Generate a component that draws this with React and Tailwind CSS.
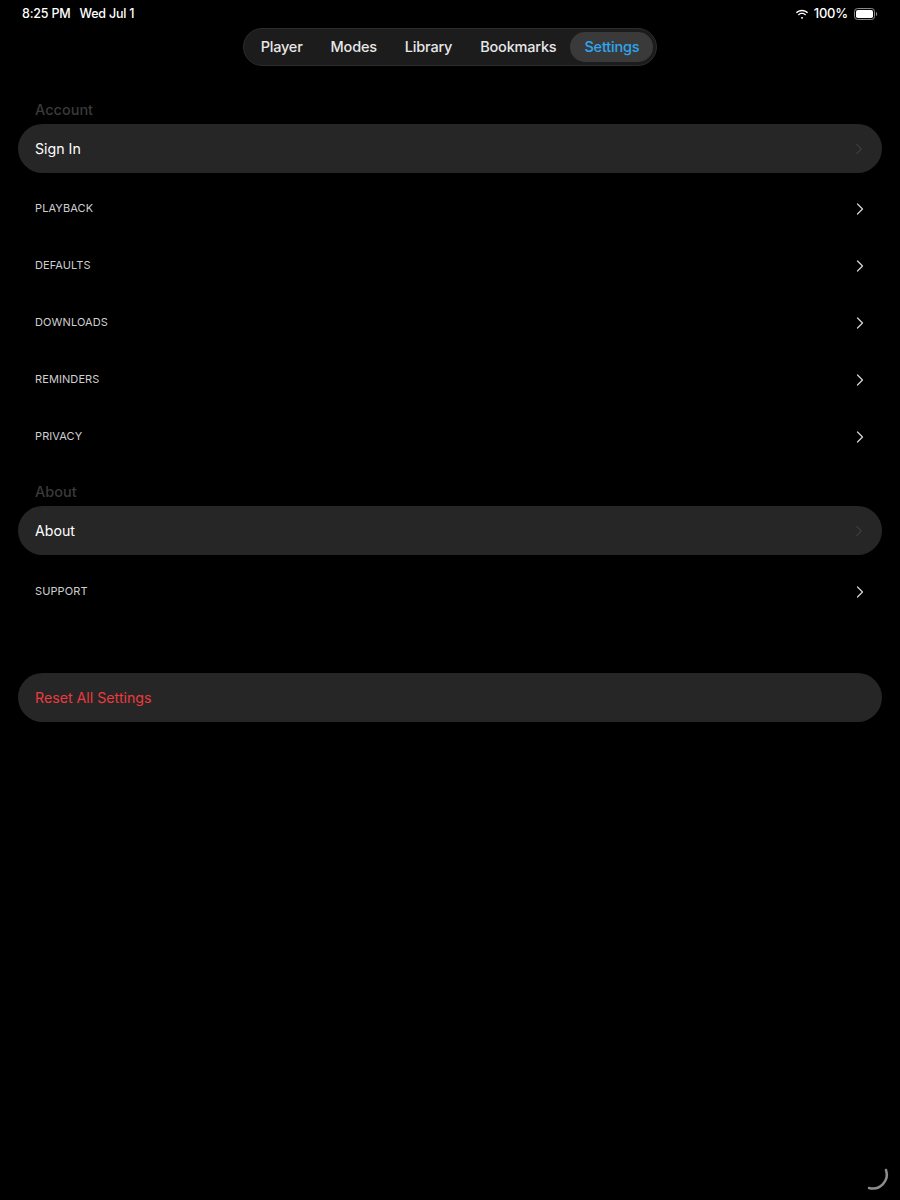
import { ChevronRight } from "lucide-react"

const tabs = ["Player", "Modes", "Library", "Bookmarks", "Settings"]
const mainItems = ["PLAYBACK", "DEFAULTS", "DOWNLOADS", "REMINDERS", "PRIVACY"]

function StatusBar() {
    return (
        <div className="h-[28px] flex items-center justify-between pl-[22px] pr-[22px] text-white text-[12.5px] font-medium tracking-[-0.2px]">
            <div className="flex items-center gap-[9px]">
                <span>8:25 PM</span>
                <span>Wed Jul 1</span>
            </div>
            <div className="flex items-center gap-[5px]">
                {/* wifi */}
                <svg width="14" height="11" viewBox="0 0 14 11" fill="white">
                    <path d="M7 2.2c2 0 3.8.8 5.1 2.1l1-1C11.5 1.7 9.4.8 7 .8S2.5 1.7.9 3.3l1 1C3.2 3 5 2.2 7 2.2z" />
                    <path d="M7 5.1c1.2 0 2.3.5 3.1 1.3l1-1C10 4.3 8.6 3.7 7 3.7S4 4.3 2.9 5.4l1 1C4.7 5.6 5.8 5.1 7 5.1z" />
                    <path d="M7 8c.5 0 .9.2 1.2.5L7 10.2 5.8 8.5C6.1 8.2 6.5 8 7 8z" />
                </svg>
                <span className="text-[13px]">100%</span>
                <svg width="24" height="12" viewBox="0 0 24 12" className="ml-[1px]">
                    <rect x="0.5" y="0.5" width="20" height="11" rx="3" fill="none" stroke="#8a8a8a" />
                    <rect x="2" y="2" width="17" height="8" rx="1.8" fill="white" />
                    <path d="M22 4v4c.8-.3 1.2-1 1.2-2s-.4-1.7-1.2-2z" fill="#8a8a8a" />
                </svg>
            </div>
        </div>
    )
}

function Tabs() {
    return (
        <div className="flex justify-center">
            <div className="flex items-center h-[38px] p-[3px] rounded-full bg-[#1c1c1c] border border-[#2c2c2c]">
                {tabs.map((t) => (
                    <div
                        key={t}
                        className={`h-full flex items-center px-[14px] rounded-full text-[14.5px] font-medium tracking-[-0.2px] ${t === "Settings" ? "bg-[#3a3a3a] text-[#2ea6f0]" : "text-[#e8e8e8]"}`}
                    >
                        {t}
                    </div>
                ))}
            </div>
        </div>
    )
}

function SectionHeader({ children }) {
    return (
        <div className="h-[20px] flex items-center px-[17px] mb-[4px] text-[14.5px] font-medium text-[#3a3a3a]">
            {children}
        </div>
    )
}

function PillRow({ label, red, chevron }) {
    return (
        <div className="h-[49px] rounded-full bg-[#262626] flex items-center justify-between pl-[17px] pr-[14px]">
            <span className={`text-[14.2px] ${red ? "text-[#ec3a3d]" : "text-white"}`}>{label}</span>
            {chevron && <ChevronRight size={18} strokeWidth={1.5} className="text-[#3d3d3d]" />}
        </div>
    )
}

function ListItem({ label }) {
    return (
        <div className="h-[57px] flex items-center justify-between pl-[17px] pr-[12px]">
            <span className="text-[11px] tracking-[0.1px] text-[#cfcfcf]">{label}</span>
            <ChevronRight size={20} strokeWidth={1.5} className="text-[#d4d4d4]" />
        </div>
    )
}

export default function App() {
    return (
        <div className="relative w-[900px] h-[1200px] bg-black overflow-hidden" style={{ fontFamily: "Inter, 'Noto Sans', sans-serif" }}>
            <StatusBar />
            <Tabs />

            <div className="px-[18px] pt-[34px]">
                {/* Account */}
                <SectionHeader>Account</SectionHeader>
                <PillRow label="Sign In" chevron />
                <div className="mt-[7px]">
                    {mainItems.map((item) => (
                        <ListItem key={item} label={item} />
                    ))}
                </div>

                {/* About */}
                <div className="mt-[17px]">
                    <SectionHeader>About</SectionHeader>
                    <PillRow label="About" chevron />
                    <div className="mt-[8px]">
                        <ListItem label="SUPPORT" />
                    </div>
                </div>

                <div className="mt-[53px]">
                    <PillRow label="Reset All Settings" red />
                </div>
            </div>

            {/* loading arc */}
            <svg width="30" height="30" viewBox="0 0 30 30" className="absolute right-[4px] bottom-[4px]">
                <path d="M20 4 A14 14 0 0 1 3 22" fill="none" stroke="#8c8c8c" strokeWidth="2.5" strokeLinecap="round" />
            </svg>
        </div>
    )
}
